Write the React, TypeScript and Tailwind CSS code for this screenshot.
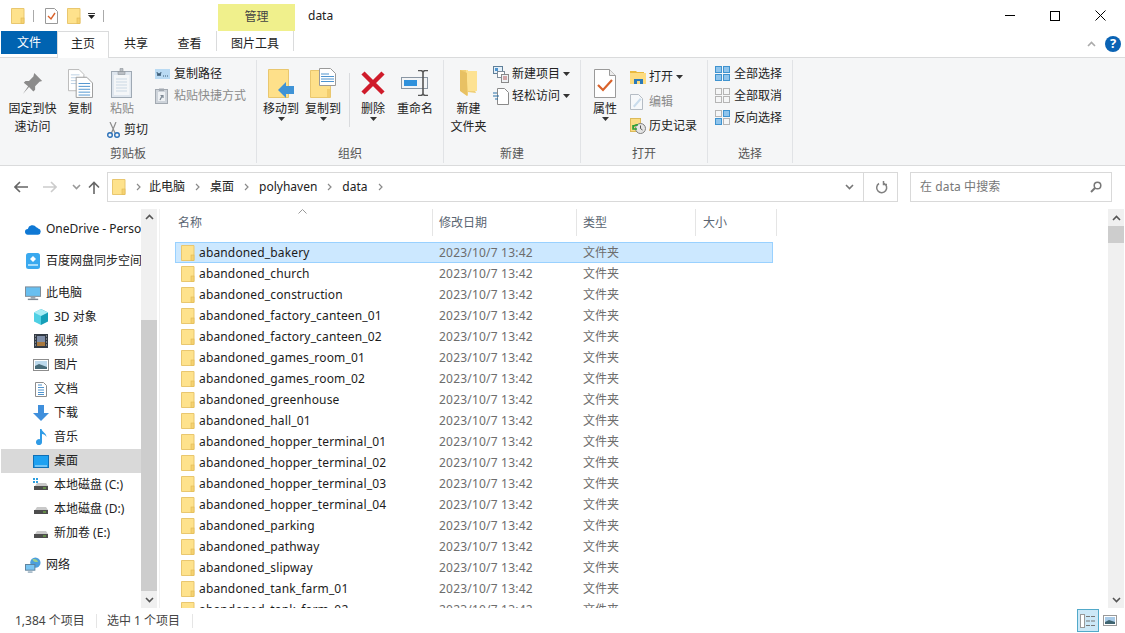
import React from "react";

const Folder = ({ s = 1 }: { s?: number }) => (
  <svg width={14 * s} height={16 * s} viewBox="0 0 14 16" className="shrink-0">
    <path d="M.5.500h12.500v15H.5z" fill="#fee28c" stroke="#e9c76f" />
    <rect x="10" y="10" width="3" height="5.500" fill="#f5d271" stroke="#e0b954" strokeWidth=".6" />
  </svg>
);

const Tri = ({ c = "#333" }: { c?: string }) => (
  <svg width="7" height="4" viewBox="0 0 7 4" className="shrink-0"><path d="M0 0h7L3.500 4z" fill={c} /></svg>
);

const PinIcon = () => (
  <svg width="21" height="23" viewBox="0 0 24 26">
    <path d="M14 1l9 9-3 1-5 5 0 4-2 2-5-5-7 8 6-9-5-4 2-2h4l5-5z" fill="#8b8b8b" />
  </svg>
);
const CopyIcon = () => (
  <svg width="25" height="29" viewBox="0 0 26 30">
    <path d="M.5.500h11l5 5v17H.5z" fill="#fff" stroke="#b8b8b8" />
    <path d="M3 6h9M3 9h11M3 12h11M3 15h11" stroke="#bcd0e3" />
    <path d="M8.500 8.500h11l6 6v15h-17z" fill="#fff" stroke="#9a9a9a" />
    <path d="M11 15h12M11 18h12M11 21h12M11 24h12M11 27h12" stroke="#4f94cf" />
  </svg>
);
const PasteIcon = () => (
  <svg width="22" height="30" viewBox="0 0 22 30">
    <rect x=".5" y="3.500" width="20" height="26" fill="#dfe6ee" stroke="#9fa9b4" />
    <rect x="3" y="7" width="15.500" height="20" fill="#f4f6f8" />
    <path d="M5 11h11M5 14h11M5 17h11M5 20h11M5 23h11" stroke="#cbd8e4" />
    <path d="M7 3.500h7v3H7zM9 .5h3v3H9z" fill="#b9bec4" stroke="#8f959b" strokeWidth=".6" />
  </svg>
);
const PathIcon = () => (
  <svg width="15" height="10" viewBox="0 0 15 10">
    <rect width="15" height="10" fill="#b9daf3" />
    <path d="M2 3l1 4 1-3 1 3 1-4M8 7h1M10 7h1M12 7h1" stroke="#30506b" strokeWidth=".9" fill="none" />
  </svg>
);
const ShortcutIcon = () => (
  <svg width="13" height="16" viewBox="0 0 13 16">
    <rect x=".5" y="1.500" width="12" height="14" fill="#cdd3da" stroke="#a2a9b1" />
    <rect x="3" y="4" width="7" height="9" fill="#eef1f4" />
    <path d="M4 .5h5v2.500H4z" fill="#a2a9b1" />
    <path d="M5 12l2-4M5.500 7.500H8V10" stroke="#7c8894" strokeWidth="1.200" fill="none" />
  </svg>
);
const ScissorsIcon = () => (
  <svg width="13" height="16" viewBox="0 0 13 16" className="shrink-0">
    <path d="M9 0L4.500 11M3 0l5 11" stroke="#8c8c8c" strokeWidth="1.200" fill="none" />
    <circle cx="3" cy="13" r="2.300" fill="none" stroke="#2a70b8" strokeWidth="1.400" />
    <circle cx="10" cy="13" r="2.300" fill="none" stroke="#2a70b8" strokeWidth="1.400" />
  </svg>
);
const BlueArrowLeft = () => (
  <path d="M0 8l8-8v4h8v8H8v4z" fill="#3f93d6" />
);
const MoveIcon = () => (
  <svg width="27" height="29" viewBox="0 0 27 29">
    <path d="M.5.500h20v28H.5z" fill="#fee08a" stroke="#e9c76f" />
    <g transform="translate(10 13)"><BlueArrowLeft /></g>
  </svg>
);
const CopyToIcon = () => (
  <svg width="27" height="30" viewBox="0 0 27 30">
    <path d="M.5 2.500h20v27H.5z" fill="#fee08a" stroke="#e9c76f" />
    <path d="M9.500.500h11l5 5v12h-16z" fill="#fff" stroke="#9a9a9a" />
    <path d="M11 6h8M11 8.500h13M11 11h13M11 13.500h13" stroke="#4f94cf" />
    <path d="M17 29v-8h3v8z" fill="#f2cd6e" />
  </svg>
);
const DeleteIcon = () => (
  <svg width="26" height="26" viewBox="0 0 26 26">
    <path d="M3 3l20 20M23 3L3 23" stroke="#cf1b2a" strokeWidth="4.500" />
  </svg>
);
const RenameIcon = () => (
  <svg width="28" height="26" viewBox="0 0 28 26">
    <rect x=".5" y="7.500" width="26" height="11" fill="#f2f4f6" stroke="#8a96a3" />
    <rect x="3" y="10" width="13" height="6" fill="#2f91dc" />
    <path d="M17 .5h3.500L22 2l1.500-1.500H27M22 2v22M17 25.500h3.500L22 24l1.500 1.500H27" stroke="#555" strokeWidth="1.600" fill="none" />
  </svg>
);
const NewFolderIcon = () => (
  <svg width="20" height="28" viewBox="0 0 20 28">
    <path d="M1 1h6l1 2 9 21-8-1 0 4-7-5z" fill="#f0cf76" />
    <path d="M7 1h2v1l9 0v20l-9 0z" fill="#fde292" />
    <path d="M1 1l7 3v23l-7-5z" fill="#e8c163" />
  </svg>
);
const NewItemIcon = () => (
  <svg width="16" height="17" viewBox="0 0 16 17">
    <rect x=".5" y=".5" width="9" height="7" fill="#e4f0f9" stroke="#5f7f99" />
    <rect x="2" y="2" width="3" height="3" fill="#4f94cf" />
    <rect x="4.500" y="5.500" width="7" height="6" fill="#fff" stroke="#7f8c99" />
    <rect x="8.500" y="8.500" width="7" height="8" fill="#eef1f4" stroke="#8a8a8a" />
    <path d="M10 11h4M10 13h4" stroke="#b45d5d" />
  </svg>
);
const EasyAccessIcon = () => (
  <svg width="16" height="17" viewBox="0 0 16 17">
    <path d="M4.500.5h7l4 4v12h-11z" fill="#fff" stroke="#8a8a8a" />
    <path d="M0 5h4M0 8h6M2 11h3" stroke="#2a70a8" strokeWidth="1.200" />
  </svg>
);
const PropsIcon = () => (
  <svg width="22" height="29" viewBox="0 0 22 29">
    <path d="M.5.500h15l6 6v22H.5z" fill="#fff" stroke="#9a9a9a" />
    <path d="M15.500.5v6h6" fill="#ececec" stroke="#9a9a9a" />
    <path d="M4 16l5 5 9-10" stroke="#d9622b" strokeWidth="2.200" fill="none" />
  </svg>
);
const OpenIcon = () => (
  <svg width="17" height="14" viewBox="0 0 17 14">
    <path d="M0 1h6l1 1h7v3H0z" fill="#e9b93e" />
    <rect y="3" width="16" height="11" fill="#fddc80" />
    <path d="M4 14V9h9v5h-3v-3H7v3z" fill="#2b79b9" />
  </svg>
);
const EditIcon = () => (
  <svg width="14" height="16" viewBox="0 0 14 16">
    <path d="M.5.500h8l4 4v11H.5z" fill="#f6f8fa" stroke="#b5bcc4" />
    <path d="M3 12l7-8 1.500 1.500-7 8z" fill="#c9dcec" />
  </svg>
);
const HistoryIcon = () => (
  <svg width="16" height="16" viewBox="0 0 16 16">
    <rect x=".5" y=".5" width="10" height="13" fill="#fbdc83" stroke="#dcba5a" />
    <circle cx="10.500" cy="10.500" r="5" fill="#e5e5e5" stroke="#7f7f7f" />
    <path d="M10.500 7.500v3l2 1.500" stroke="#555" fill="none" />
    <path d="M3 10a4 4 0 0 1 5-3M3 7v4h4" stroke="#2d9f38" strokeWidth="1.600" fill="none" />
  </svg>
);
const SelectIcon = ({ a, b, c, d }: { a: boolean; b: boolean; c: boolean; d: boolean }) => {
  const cell = (x: number, y: number, on: boolean) => (
    <rect x={x + 0.5} y={y + 0.5} width={6} height={6} fill={on ? "#8fc4ec" : "#f5f6f7"} stroke={on ? "#3f93cf" : "#b5b5b5"} />
  );
  return (
    <svg width="16" height="16" viewBox="0 0 16 16">
      {cell(0, 0, a)}{cell(8, 0, b)}{cell(0, 8, c)}{cell(8, 8, d)}
    </svg>
  );
};

const Big = ({ w, icon, lines, drop, grey }: { w: number; icon: React.ReactNode; lines: string[]; drop?: boolean; grey?: boolean }) => (
  <div style={{ width: w }} className={`flex shrink-0 flex-col items-center ${grey ? "text-[#8a8a8a]" : ""}`}>
    <div className="flex h-[34px] items-center justify-center">{icon}</div>
    {lines.map((l) => (
      <div key={l} className="h-[18px] leading-[18px] whitespace-nowrap">{l}</div>
    ))}
    {drop && <div className="-mt-[1px]"><Tri /></div>}
  </div>
);

const Small = ({ icon, text, drop, grey, h = 22 }: { icon: React.ReactNode; text: string; drop?: boolean; grey?: boolean; h?: number }) => (
  <div style={{ height: h }} className={`flex items-center whitespace-nowrap ${grey ? "text-[#8a8a8a]" : ""}`}>
    <div className="flex w-[19px] shrink-0 items-center">{icon}</div>
    <span>{text}</span>
    {drop && <span className="ml-[3px]"><Tri /></span>}
  </div>
);

const Group = ({ w, label, children }: { w: number; label: string; children: React.ReactNode }) => (
  <div style={{ width: w }} className="flex shrink-0 flex-col border-r border-[#e1e3e6]">
    <div className="flex min-h-0 flex-1 pt-[4px]">{children}</div>
    <div className="h-[22px] text-center leading-[26px] text-[#555]">{label}</div>
  </div>
);

const NavRow = ({ icon, text, sub, active, mt }: { icon: React.ReactNode; text: string; sub?: boolean; active?: boolean; mt?: boolean }) => (
  <div className={`flex h-[24px] shrink-0 items-center gap-[5px] whitespace-nowrap ${sub ? "pl-[33px]" : "pl-[25px]"} ${active ? "ml-[1px] bg-[#d9d9d9] !pl-[32px]" : ""} ${mt ? "mt-[8px]" : ""}`}>
    <div className="flex h-[18px] w-[16px] shrink-0 items-center justify-center">{icon}</div>
    <span>{text}</span>
  </div>
);

const Drive = ({ win }: { win?: boolean }) => (
  <svg width="16" height="16" viewBox="0 0 16 16">
    {win && <path d="M0 1h2v2H0zM3 1h2v2H3zM0 4h2v2H0zM3 4h2v2H3z" fill="#2f9fe0" />}
    <path d="M2 9L4 6h9l2 3z" fill="#c9c9c9" />
    <rect x="1" y="9" width="14" height="4" fill="#4d4d4d" />
    <rect x="10" y="10.500" width="3" height="1" fill="#7ac943" />
  </svg>
);

const navIcons = {
  onedrive: (
    <svg width="17" height="11" viewBox="0 0 17 11"><path d="M3 11a3 3 0 0 1 0-6 5 5 0 0 1 9-2 3.500 3.500 0 0 1 2 1.500 3.300 3.300 0 0 1 0 6.500z" fill="#0f78d4" /></svg>
  ),
  baidu: (
    <svg width="14" height="16" viewBox="0 0 14 16"><rect width="14" height="16" rx="2.500" fill="#3aa9ef" /><path d="M7 3l3 3-3 3-3-3z" fill="#fff" /><rect x="2" y="11" width="10" height="2" fill="#a6dcfb" /></svg>
  ),
  pc: (
    <svg width="17" height="15" viewBox="0 0 17 15"><rect x=".5" y=".5" width="16" height="10" fill="#68bff0" stroke="#7d8893" /><rect x="6" y="11" width="5" height="2" fill="#9aa5af" /><rect x="3" y="13" width="11" height="1.500" fill="#7d8893" /></svg>
  ),
  cube: (
    <svg width="16" height="16" viewBox="0 0 16 16"><path d="M8 0l7 3.500v9L8 16z" fill="#169fb8" /><path d="M8 0L1 3.500v9L8 16z" fill="#4fd0e4" /><path d="M8 0L1 3.500 8 7l7-3.500z" fill="#a8ecf5" /></svg>
  ),
  video: (
    <svg width="14" height="14" viewBox="0 0 14 14"><rect width="14" height="14" fill="#333b45" /><rect x="3" y="2" width="8" height="10" fill="#7f8ea8" /><path d="M1 2h1M1 5h1M1 8h1M1 11h1M12 2h1M12 5h1M12 8h1M12 11h1" stroke="#c9c9c9" /><rect x="3" y="8" width="8" height="4" fill="#a8793f" /></svg>
  ),
  pic: (
    <svg width="16" height="12" viewBox="0 0 16 12"><rect x=".5" y=".5" width="15" height="11" fill="#fff" stroke="#8d8d8d" /><rect x="2" y="2" width="12" height="8" fill="#bcd9ec" /><path d="M2 7l4-2 8 3v2H2z" fill="#476b78" /></svg>
  ),
  doc: (
    <svg width="12" height="15" viewBox="0 0 12 15"><path d="M.5.500h8l3 3v11H.5z" fill="#fff" stroke="#8d8d8d" /><path d="M3 3h4M3 5.500h6M3 8h6M3 10.500h6M3 12.500h6" stroke="#4f94cf" /></svg>
  ),
  down: (
    <svg width="16" height="16" viewBox="0 0 16 16"><path d="M5 0h6v8h5l-8 8-8-8h5z" fill="#3f8fdc" /></svg>
  ),
  music: (
    <svg width="12" height="16" viewBox="0 0 12 16"><path d="M5 0h1.500c.5 3 5 4 5 8-1-2-3-3-4.500-3v8a3 3 0 1 1-2-2.700z" fill="#2f9be6" /></svg>
  ),
  desk: (
    <svg width="16" height="13" viewBox="0 0 16 13"><rect x=".5" y=".5" width="15" height="12" fill="#1ea1f1" stroke="#0f6fb5" /><path d="M2 11h12" stroke="#c7e8fb" /></svg>
  ),
  net: (
    <svg width="17" height="16" viewBox="0 0 17 16"><circle cx="11" cy="5.500" r="5.500" fill="#4c9fdc" /><path d="M8 2c2-1 5 0 6 3-3 0-5 0-6-3z" fill="#9fd08a" /><rect x=".5" y="7.500" width="10" height="6" fill="#79c5f2" stroke="#5d7f99" /><path d="M3 15.500h5" stroke="#5d7f99" /></svg>
  ),
};

const files = [
  "abandoned_bakery",
  "abandoned_church",
  "abandoned_construction",
  "abandoned_factory_canteen_01",
  "abandoned_factory_canteen_02",
  "abandoned_games_room_01",
  "abandoned_games_room_02",
  "abandoned_greenhouse",
  "abandoned_hall_01",
  "abandoned_hopper_terminal_01",
  "abandoned_hopper_terminal_02",
  "abandoned_hopper_terminal_03",
  "abandoned_hopper_terminal_04",
  "abandoned_parking",
  "abandoned_pathway",
  "abandoned_slipway",
  "abandoned_tank_farm_01",
  "abandoned_tank_farm_02",
];

const Chev = ({ up, c = "#555" }: { up?: boolean; c?: string }) => (
  <svg width="9" height="6" viewBox="0 0 9 6">
    <path d={up ? "M1 5l3.500-3.500L8 5" : "M1 1l3.500 3.500L8 1"} stroke={c} strokeWidth="1.600" fill="none" />
  </svg>
);

const Crumb = () => (
  <svg width="5" height="8" viewBox="0 0 5 8" className="shrink-0"><path d="M1 1l3 3-3 3" stroke="#8a8a8a" strokeWidth="1.200" fill="none" /></svg>
);

export default function App() {
  return (
    <div className="flex h-[633px] w-[1125px] flex-col overflow-hidden bg-white font-['Noto_Sans','Noto_Sans_CJK_SC',sans-serif] text-[12px] text-[#222]">
      {/* Title bar */}
      <div className="flex h-[31px] shrink-0">
        <div className="flex items-center pl-[11px]">
          <div className="mt-[1px]"><Folder /></div>
          <div className="ml-[8px] h-[12px] w-px bg-[#aaa]" />
          <div className="ml-[11px]"><PropsIconSmall /></div>
          <div className="ml-[9px]"><Folder /></div>
          <div className="ml-[7px] flex flex-col items-center gap-[1px]"><div className="h-px w-[7px] bg-[#333]" /><Tri c="#222" /></div>
          <div className="ml-[8px] h-[12px] w-px bg-[#aaa]" />
        </div>
        <div className="ml-[114px] mt-[4px] flex h-[27px] w-[77px] items-center justify-center bg-[#f0f08c] pb-[1px] text-[#444]">管理</div>
        <div className="ml-[13px] flex items-center pt-[1px] text-[#222]">data</div>
        <div className="ml-auto flex items-center pr-[19px]">
          <div className="h-px w-[10px] bg-black" />
          <div className="ml-[35px] h-[10px] w-[10px] border border-black" />
          <svg width="11" height="11" viewBox="0 0 11 11" className="ml-[35px]"><path d="M.5.500l10 10M10.500.500l-10 10" stroke="#000" /></svg>
        </div>
      </div>
      {/* Tabs */}
      <div className="relative flex h-[27px] shrink-0 border-b border-[#dadbdc]">
        <div className="ml-[1px] flex h-[23px] w-[56px] items-center justify-center bg-[#0063b1] pt-[1px] text-white">文件</div>
        <div className="z-10 flex h-[27px] w-[52px] items-center justify-center border-x border-t border-[#dadbdc] bg-[#fff] pb-[2px]">主页</div>
        <div className="flex h-[25px] w-[54px] items-center justify-center">共享</div>
        <div className="flex h-[25px] w-[53px] items-center justify-center">查看</div>
        <div className="flex h-[20px] w-[78px] items-center justify-center border-x border-[#dadbdc] pt-[6px]">图片工具</div>
        <div className="ml-auto flex items-center pr-[4px] pb-[1px]">
          <Chev up c="#aaa" />
          <div className="ml-[9px] flex h-[16px] w-[16px] items-center justify-center rounded-full bg-[#0a63b4] text-[13px] font-bold text-white">?</div>
        </div>
      </div>
      {/* Ribbon */}
      <div className="flex h-[108px] shrink-0 border-b border-[#dadbdc] bg-[#f5f6f7] py-[2px]">
        <Group w={257} label="剪贴板">
          <div className="flex pt-[2px]">
            <div className="ml-[2px]"><Big w={61} icon={<PinIcon />} lines={["固定到快", "速访问"]} /></div>
            <Big w={34} icon={<CopyIcon />} lines={["复制"]} />
            <div className="w-[50px] shrink-0">
              <Big w={50} icon={<PasteIcon />} lines={["粘贴"]} grey />
              <div className="mt-[3px] ml-[10px] flex items-center gap-[4px] whitespace-nowrap"><ScissorsIcon /><span>剪切</span></div>
            </div>
            <div className="ml-[8px] -mt-[3px] flex flex-col">
              <Small icon={<PathIcon />} text="复制路径" />
              <Small icon={<ShortcutIcon />} text="粘贴快捷方式" grey />
            </div>
          </div>
        </Group>
        <Group w={187} label="组织">
          <div className="flex pt-[2px]">
            <div className="ml-[2px]"><Big w={44} icon={<MoveIcon />} lines={["移动到"]} drop /></div>
            <Big w={40} icon={<CopyToIcon />} lines={["复制到"]} drop />
            <div className="mx-[6px] mt-[7px] h-[54px] w-px shrink-0 bg-[#d9dbde]" />
            <Big w={34} icon={<DeleteIcon />} lines={["删除"]} drop />
            <Big w={50} icon={<RenameIcon />} lines={["重命名"]} />
          </div>
        </Group>
        <Group w={137} label="新建">
          <div className="flex pt-[2px]">
            <Big w={49} icon={<NewFolderIcon />} lines={["新建", "文件夹"]} />
            <div className="-mt-[3px] flex flex-col">
              <Small icon={<NewItemIcon />} text="新建项目" drop />
              <Small icon={<EasyAccessIcon />} text="轻松访问" drop />
            </div>
          </div>
        </Group>
        <Group w={127} label="打开">
          <div className="flex pt-[2px]">
            <Big w={48} icon={<PropsIcon />} lines={["属性"]} drop />
            <div className="ml-[1px] -mt-[2px] flex flex-col">
              <Small icon={<OpenIcon />} text="打开" drop h={25} />
              <Small icon={<EditIcon />} text="编辑" grey h={25} />
              <Small icon={<HistoryIcon />} text="历史记录" h={24} />
            </div>
          </div>
        </Group>
        <Group w={85} label="选择">
          <div className="-mt-[1px] flex flex-col pl-[7px]">
            <Small icon={<SelectIcon a b c d />} text="全部选择" />
            <Small icon={<SelectIcon a={false} b={false} c={false} d={false} />} text="全部取消" />
            <Small icon={<SelectIcon a={false} b c d={false} />} text="反向选择" />
          </div>
        </Group>
      </div>
      {/* Address row */}
      <div className="flex h-[43px] shrink-0 items-start pt-[6px]">
        <div className="flex h-[30px] w-[107px] shrink-0 items-center">
          <svg width="14" height="12" viewBox="0 0 14 12" className="ml-[14px]"><path d="M6 1L1 6l5 5M1 6h13" stroke="#666" strokeWidth="1.600" fill="none" /></svg>
          <svg width="14" height="12" viewBox="0 0 14 12" className="ml-[15px]"><path d="M8 1l5 5-5 5M13 6H0" stroke="#ccc" strokeWidth="1.600" fill="none" /></svg>
          <div className="ml-[15px]"><Chev c="#999" /></div>
          <svg width="12" height="13" viewBox="0 0 12 13" className="ml-[7px]"><path d="M1 6.500L6 1.500l5 5M6 1.500V13" stroke="#666" strokeWidth="1.600" fill="none" /></svg>
        </div>
        <div className="flex h-[30px] w-[791px] shrink-0 items-center border border-[#d9d9d9] pl-[4px]">
          <Folder />
          <div className="ml-[10px]"><Crumb /></div>
          <span className="ml-[8px]">此电脑</span>
          <div className="ml-[10px]"><Crumb /></div>
          <span className="ml-[10px]">桌面</span>
          <div className="ml-[10px]"><Crumb /></div>
          <span className="ml-[10px]">polyhaven</span>
          <div className="ml-[10px]"><Crumb /></div>
          <span className="ml-[10px]">data</span>
          <div className="ml-[10px]"><Crumb /></div>
          <div className="ml-auto flex h-full items-center">
            <Chev c="#777" />
            <div className="ml-[9px] h-full w-px bg-[#d9d9d9]" />
            <svg width="13" height="13" viewBox="0 0 13 13" className="ml-[11px] mr-[9px]"><path d="M4 2.500a5 5 0 1 0 5-.2M8.500 0v3.500H12" stroke="#808080" strokeWidth="1.500" fill="none" /></svg>
          </div>
        </div>
        <div className="ml-[12px] flex h-[30px] w-[202px] shrink-0 items-center justify-between border border-[#d9d9d9] px-[9px] text-[#777]">
          <span className="tracking-[0.1px]">在 data 中搜索</span>
          <svg width="12" height="12" viewBox="0 0 12 12"><circle cx="7.500" cy="4.500" r="3.300" fill="none" stroke="#777" strokeWidth="1.500" /><path d="M5 7l-4 4" stroke="#777" strokeWidth="2" /></svg>
        </div>
      </div>
      {/* Main */}
      <div className="flex min-h-0 flex-1">
        <div className="flex w-[141px] shrink-0 flex-col overflow-hidden pt-[8px]">
          <NavRow icon={navIcons.onedrive} text="OneDrive - Personal" />
          <NavRow icon={navIcons.baidu} text="百度网盘同步空间" mt />
          <NavRow icon={navIcons.pc} text="此电脑" mt />
          <NavRow icon={navIcons.cube} text="3D 对象" sub />
          <NavRow icon={navIcons.video} text="视频" sub />
          <NavRow icon={navIcons.pic} text="图片" sub />
          <NavRow icon={navIcons.doc} text="文档" sub />
          <NavRow icon={navIcons.down} text="下载" sub />
          <NavRow icon={navIcons.music} text="音乐" sub />
          <NavRow icon={navIcons.desk} text="桌面" sub active />
          <NavRow icon={<Drive win />} text="本地磁盘 (C:)" sub />
          <NavRow icon={<Drive />} text="本地磁盘 (D:)" sub />
          <NavRow icon={<Drive />} text="新加卷 (E:)" sub />
          <NavRow icon={navIcons.net} text="网络" mt />
        </div>
        <div className="flex w-[16px] shrink-0 flex-col bg-[#f0f0f0]">
          <div className="flex h-[17px] items-center justify-center"><Chev up /></div>
          <div className="mt-[94px] h-[272px] bg-[#cdcdcd]" />
          <div className="mt-auto flex h-[17px] items-center justify-center"><Chev /></div>
        </div>
        <div className="ml-[2px] w-px shrink-0 bg-[#f0f0f0]" />
        <div className="relative flex min-w-0 flex-1 flex-col overflow-hidden pl-[12px]">
          <div className="flex h-[27px] shrink-0 text-[#5a6572]">
            <div className="flex w-[261px] shrink-0 items-center border-r border-[#e5e5e5] pl-[6px]">名称</div>
            <div className="flex w-[144px] shrink-0 items-center border-r border-[#e5e5e5] pl-[6px]">修改日期</div>
            <div className="flex w-[119px] shrink-0 items-center border-r border-[#e5e5e5] pl-[6px]">类型</div>
            <div className="flex w-[81px] shrink-0 items-center border-r border-[#e5e5e5] pl-[7px]">大小</div>
          </div>
          <svg width="9" height="5" viewBox="0 0 9 5" className="absolute left-[138px] top-0"><path d="M.5 4.500l4-4 4 4" stroke="#999" fill="none" /></svg>
          <div className="ml-[3px] mt-[6px] flex flex-col">
            {files.map((f, i) => (
              <div
                key={f}
                className={`flex h-[21px] w-[598px] shrink-0 items-center border pl-[5px] ${i === 0 ? "border-[#99d1ff] bg-[#cce8ff]" : "border-transparent"}`}
              >
                <div className="flex w-[258px] shrink-0 items-center gap-[4px]">
                  <Folder />
                  <span className="tracking-[0.15px] text-[#1c1c1c]">{f}</span>
                </div>
                <span className="w-[144px] shrink-0 tracking-[0.2px] text-[#6d6d6d]">2023/10/7 13:42</span>
                <span className="text-[#6d6d6d]">文件夹</span>
              </div>
            ))}
          </div>
        </div>
        <div className="mr-px flex w-[16px] shrink-0 flex-col bg-[#f0f0f0]">
          <div className="flex h-[17px] items-center justify-center"><Chev up /></div>
          <div className="h-[17px] bg-[#cdcdcd]" />
          <div className="mt-auto flex h-[17px] items-center justify-center"><Chev /></div>
        </div>
      </div>
      {/* Status */}
      <div className="flex h-[25px] shrink-0 items-center pl-[15px] text-[#444]">
        <span className="w-[81px]">1,384 个项目</span>
        <div className="h-[14px] w-px bg-[#e5e5e5]" />
        <span className="ml-[10px] w-[85px]">选中 1 个项目</span>
        <div className="h-[14px] w-px bg-[#e5e5e5]" />
        <div className="ml-auto flex items-center pr-[8px]">
          <div className="flex h-[23px] w-[22px] items-center justify-center border border-[#52a9c9] bg-[#cce8f7]">
            <svg width="16" height="14" viewBox="0 0 16 14"><rect x=".5" y=".5" width="4" height="13" fill="#fff" stroke="#999" /><path d="M6 2.500h4M11 2.500h4M6 7h4M11 7h4M6 11.500h4M11 11.500h4" stroke="#777" /></svg>
          </div>
          <div className="ml-[4px]">
            <svg width="14" height="11" viewBox="0 0 14 11"><rect x=".5" y=".5" width="13" height="10" fill="#fff" stroke="#999" /><rect x="2" y="2" width="10" height="7" fill="#a9cbe8" /><path d="M2 7l4-2 6 2v2H2z" fill="#3f6470" /></svg>
          </div>
        </div>
      </div>
    </div>
  );
}

function PropsIconSmall() {
  return (
    <svg width="13" height="16" viewBox="0 0 13 16">
      <path d="M.5.500h9l3 3v12H.5z" fill="#fff" stroke="#999" />
      <path d="M3 8l3 3 4-6" stroke="#d9622b" strokeWidth="1.400" fill="none" />
    </svg>
  );
}
